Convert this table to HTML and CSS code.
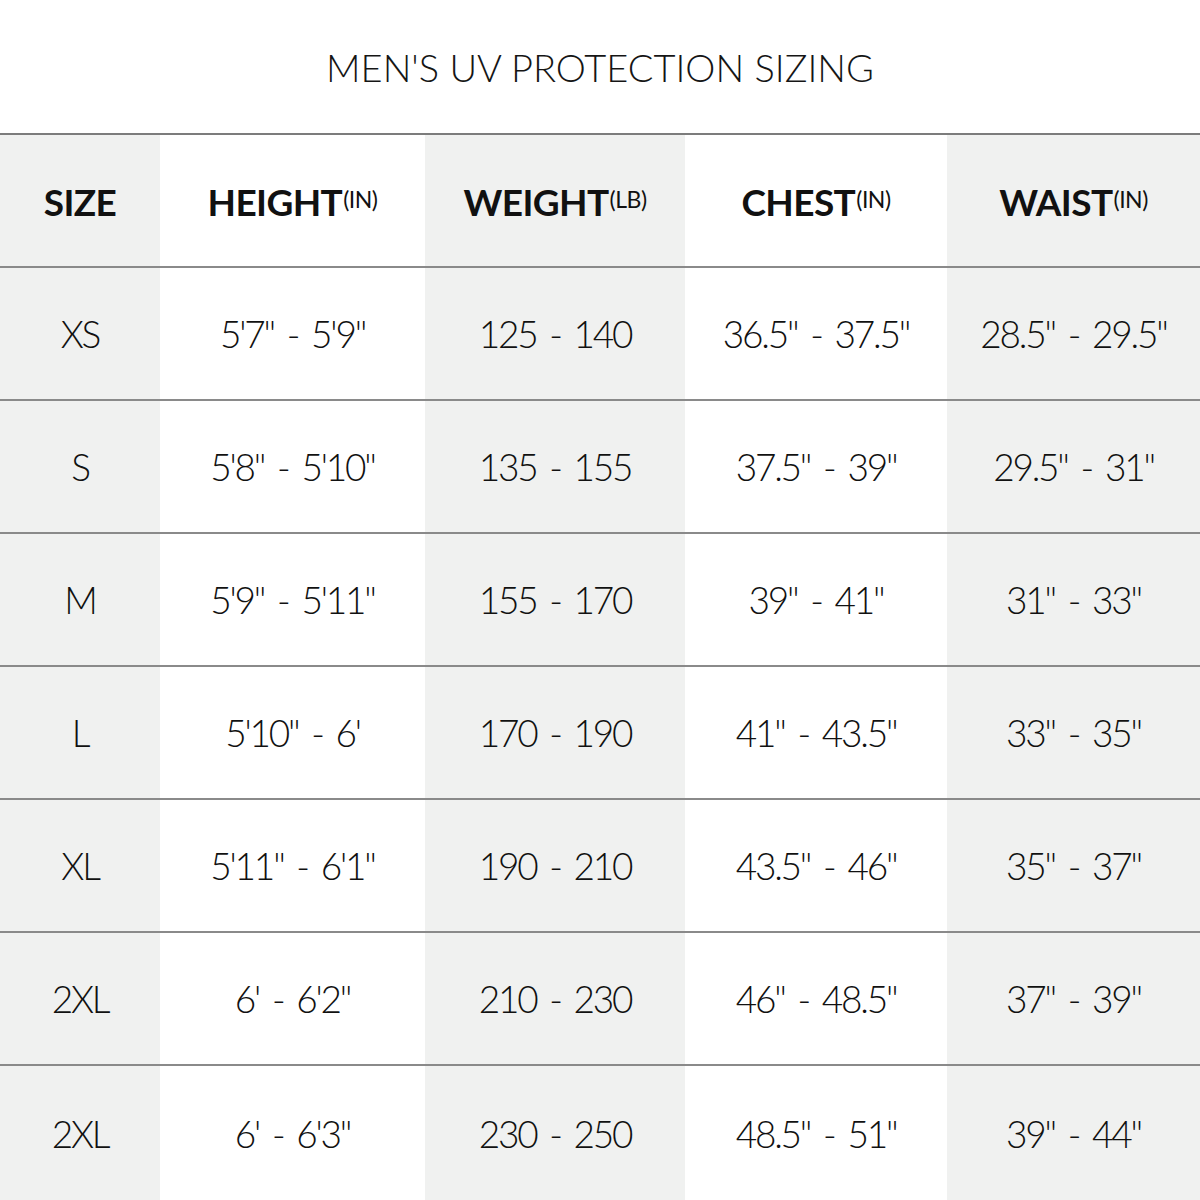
FILE: index.html
```html
<!DOCTYPE html>
<html>
<head>
<meta charset="utf-8">
<link rel="stylesheet" href="styles.css">
</head>
<body>
<div class="title">MEN'S UV PROTECTION SIZING</div>
<div class="table">
  <div class="row head">
    <div class="c g">SIZE</div>
    <div class="c">HEIGHT<sup>(IN)</sup></div>
    <div class="c g">WEIGHT<sup>(LB)</sup></div>
    <div class="c">CHEST<sup>(IN)</sup></div>
    <div class="c g">WAIST<sup>(IN)</sup></div>
  </div>
  <div class="row">
    <div class="c g">XS</div><div class="c">5'7" - 5'9"</div><div class="c g">125 - 140</div><div class="c">36.5" - 37.5"</div><div class="c g">28.5" - 29.5"</div>
  </div>
  <div class="row">
    <div class="c g">S</div><div class="c">5'8" - 5'10"</div><div class="c g">135 - 155</div><div class="c">37.5" - 39"</div><div class="c g">29.5" - 31"</div>
  </div>
  <div class="row">
    <div class="c g">M</div><div class="c">5'9" - 5'11"</div><div class="c g">155 - 170</div><div class="c">39" - 41"</div><div class="c g">31" - 33"</div>
  </div>
  <div class="row">
    <div class="c g">L</div><div class="c">5'10" - 6'</div><div class="c g">170 - 190</div><div class="c">41" - 43.5"</div><div class="c g">33" - 35"</div>
  </div>
  <div class="row">
    <div class="c g">XL</div><div class="c">5'11" - 6'1"</div><div class="c g">190 - 210</div><div class="c">43.5" - 46"</div><div class="c g">35" - 37"</div>
  </div>
  <div class="row">
    <div class="c g">2XL</div><div class="c">6' - 6'2"</div><div class="c g">210 - 230</div><div class="c">46" - 48.5"</div><div class="c g">37" - 39"</div>
  </div>
  <div class="row last">
    <div class="c g">2XL</div><div class="c">6' - 6'3"</div><div class="c g">230 - 250</div><div class="c">48.5" - 51"</div><div class="c g">39" - 44"</div>
  </div>
</div>
</body>
</html>
```
FILE: styles.css
```css
html, body {
  margin: 0;
  padding: 0;
  background: #ffffff;
}
body {
  font-family: Lato, "Open Sans", sans-serif;
  color: #111111;
  width: 1200px;
  height: 1200px;
  overflow: hidden;
}
.title {
  height: 133px;
  display: flex;
  align-items: center;
  justify-content: center;
  font-size: 38px;
  font-weight: 300;
  letter-spacing: 0;
  color: #151515;
}
.table {
  border-top: 2px solid #7c7c7c;
}
.row {
  display: grid;
  grid-template-columns: 160px 265px 260px 262px 1fr;
  height: 131px;
  border-bottom: 2px solid #8a8a8a;
}
.row.last {
  border-bottom: none;
  height: 135px;
}
.c {
  display: flex;
  align-items: center;
  justify-content: center;
  font-size: 37px;
  font-weight: 300;
  letter-spacing: -2.2px;
  word-spacing: 5px;
  white-space: pre;
}
.g {
  background: #f0f1f0;
}
.head .c {
  font-weight: 700;
  font-size: 37px;
  letter-spacing: -0.6px;
  word-spacing: 0;
  padding-top: 2px;
  box-sizing: border-box;
}
.head sup {
  font-size: 23px;
  font-weight: 400;
  letter-spacing: -0.5px;
  position: relative;
  top: -3px;
  margin-left: 1px;
}
```
